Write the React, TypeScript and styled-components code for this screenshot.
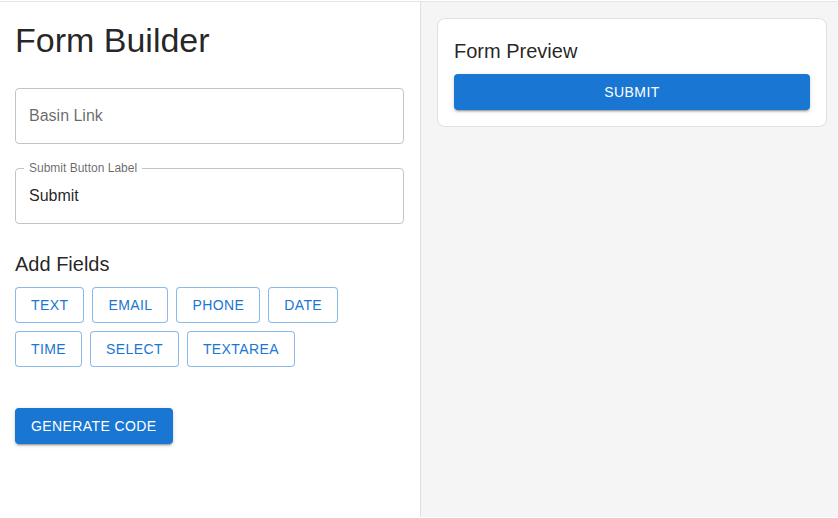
import React from "react";
import styled, { createGlobalStyle } from "styled-components";

const Global = createGlobalStyle`
  html, body { margin: 0; padding: 0; background: #fff; }
  body { font-family: "Liberation Sans", Arial, Helvetica, sans-serif; color: rgba(0,0,0,0.87); }
  * { box-sizing: border-box; }
`;

const Page = styled.div`
  margin-top: 1px;
  border-top: 1px solid #e6e6e6;
  display: grid;
  grid-template-columns: 421px 1fr;
  min-height: calc(100vh - 2px);
`;

const Builder = styled.section`
  background: #fff;
  border-right: 1px solid #e0e0e0;
  padding: 17px 16px 0 15px;
  display: flex;
  flex-direction: column;
`;

const Preview = styled.section`
  background: #f5f5f5;
  padding: 16px 11px 16px 16px;
`;

const Title = styled.h1`
  margin: 0 0 11px;
  font-size: 34px;
  line-height: 42px;
  font-weight: 400;
  color: rgba(0,0,0,0.87);
`;

const Field = styled.div`
  position: relative;
  margin: 16px 0 8px;
  height: 56px;
  border: 1px solid rgba(0,0,0,0.23);
  border-radius: 4px;
  display: flex;
  align-items: center;
  padding: 0 13px;
`;

const FieldText = styled.span<{ $placeholder?: boolean }>`
  font-size: 16px;
  color: ${(p) => (p.$placeholder ? "rgba(0,0,0,0.6)" : "rgba(0,0,0,0.87)")};
`;

const FloatLabel = styled.span`
  position: absolute;
  left: 8px;
  top: -9px;
  padding: 0 5px;
  background: #fff;
  font-size: 12px;
  line-height: 16px;
  color: rgba(0,0,0,0.6);
`;

const Section = styled.h2`
  margin: 16px 0 7px;
  font-size: 20px;
  line-height: 32px;
  font-weight: 400;
  color: rgba(0,0,0,0.87);
`;

const Chips = styled.div`
  display: flex;
  flex-wrap: wrap;
  gap: 8px;
  width: 340px;
`;

const OutlineButton = styled.button`
  height: 36px;
  padding: 0 15px;
  border: 1px solid rgba(25,118,210,0.5);
  border-radius: 4px;
  background: #fff;
  color: #1976d2;
  font-family: inherit;
  font-size: 14px;
  letter-spacing: 0.4px;
  text-transform: uppercase;
  cursor: pointer;
`;

const FilledButton = styled.button<{ $full?: boolean }>`
  height: 36px;
  padding: 0 16px;
  width: ${(p) => (p.$full ? "100%" : "auto")};
  border: none;
  border-radius: 4px;
  background: #1976d2;
  color: #fff;
  font-family: inherit;
  font-size: 14px;
  letter-spacing: 0.4px;
  text-transform: uppercase;
  box-shadow: 0 3px 1px -2px rgba(0,0,0,0.2), 0 2px 2px 0 rgba(0,0,0,0.14), 0 1px 5px 0 rgba(0,0,0,0.12);
  cursor: pointer;
`;

const Actions = styled.div`
  margin-top: 41px;
`;

const Card = styled.div`
  background: #fff;
  border: 1px solid #e0e0e0;
  border-radius: 8px;
  padding: 16px;
`;

const CardTitle = styled.h2`
  margin: 0 0 7px;
  font-size: 20px;
  line-height: 32px;
  font-weight: 400;
  color: rgba(0,0,0,0.87);
`;

const fields = ["Text", "Email", "Phone", "Date", "Time", "Select", "Textarea"];

export default function App() {
  return (
    <>
      <Global />
      <Page>
        <Builder>
          <Title>Form Builder</Title>
          <Field>
            <FieldText $placeholder>Basin Link</FieldText>
          </Field>
          <Field>
            <FloatLabel>Submit Button Label</FloatLabel>
            <FieldText>Submit</FieldText>
          </Field>
          <Section>Add Fields</Section>
          <Chips>
            {fields.map((f) => (
              <OutlineButton key={f}>{f}</OutlineButton>
            ))}
          </Chips>
          <Actions>
            <FilledButton>Generate Code</FilledButton>
          </Actions>
        </Builder>
        <Preview>
          <Card>
            <CardTitle>Form Preview</CardTitle>
            <FilledButton $full>Submit</FilledButton>
          </Card>
        </Preview>
      </Page>
    </>
  );
}
